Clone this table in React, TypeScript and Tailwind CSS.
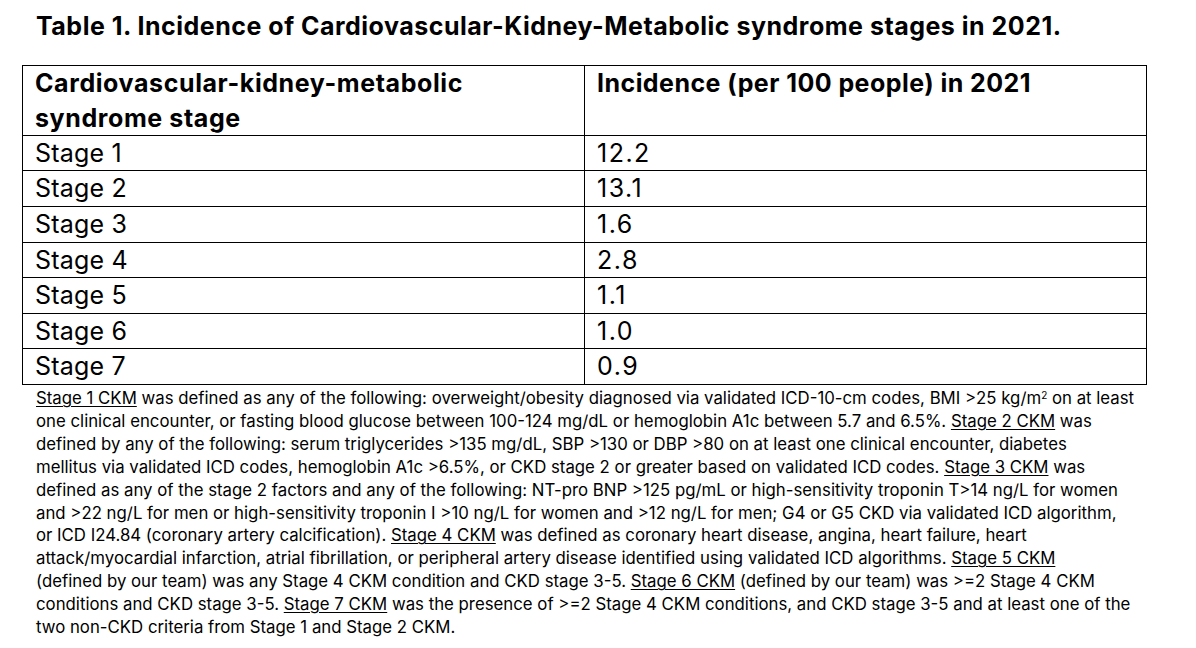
const rows = [
  ["Stage 1", "12.2"],
  ["Stage 2", "13.1"],
  ["Stage 3", "1.6"],
  ["Stage 4", "2.8"],
  ["Stage 5", "1.1"],
  ["Stage 6", "1.0"],
  ["Stage 7", "0.9"],
];

function U({ children }: { children: React.ReactNode }) {
  return <span className="underline underline-offset-[2px] decoration-1">{children}</span>;
}

export default function App() {
  return (
    <div
      className="w-[1196px] h-[648px] bg-white text-black overflow-hidden"
      style={{ fontFamily: "Inter, 'Liberation Sans', sans-serif" }}
    >
      {/* Title */}
      <h1 className="pt-[11px] pl-[36px] text-[25px] leading-[30px] tracking-[0.5px] font-bold whitespace-nowrap">
        Table 1. Incidence of Cardiovascular-Kidney-Metabolic syndrome stages in 2021.
      </h1>

      {/* Table */}
      <div className="mt-[24px] ml-[22px] w-[1125px] border-l border-t border-black grid grid-cols-[562px_562px] grid-rows-[70px_35px_36px_36px_35px_36px_35px_36px]">
        <div className="border-r border-b border-black px-[12px] text-[25px] leading-[35px] tracking-[0.6px] font-bold whitespace-nowrap">
          Cardiovascular-kidney-metabolic
          <br />
          syndrome stage
        </div>
        <div className="border-r border-b border-black px-[12px] text-[25px] leading-[35px] tracking-[0.45px] font-bold whitespace-nowrap">
          Incidence (per 100 people) in 2021
        </div>
        {rows.map(([stage, value]) => (
          <>
            <div key={stage} className="border-r border-b border-black px-[12px] pt-[1px] text-[25px] leading-[33px] tracking-[0.2px]">
              {stage}
            </div>
            <div key={value} className="border-r border-b border-black px-[12px] pt-[1px] text-[25px] leading-[33px] tracking-[1.5px]">
              {value}
            </div>
          </>
        ))}
      </div>

      {/* Footnote */}
      <div className="pl-[36px] pt-[2px] text-[16.8px] leading-[22.9px] whitespace-nowrap">
        <div>
          <U>Stage 1 CKM</U> was defined as any of the following: overweight/obesity diagnosed via validated ICD-10-cm codes, BMI &gt;25 kg/m<sup className="text-[10px]">2</sup> on at least
        </div>
        <div>
          one clinical encounter, or fasting blood glucose between 100-124 mg/dL or hemoglobin A1c between 5.7 and 6.5%. <U>Stage 2 CKM</U> was
        </div>
        <div>
          defined by any of the following: serum triglycerides &gt;135 mg/dL, SBP &gt;130 or DBP &gt;80 on at least one clinical encounter, diabetes
        </div>
        <div>
          mellitus via validated ICD codes, hemoglobin A1c &gt;6.5%, or CKD stage 2 or greater based on validated ICD codes. <U>Stage 3 CKM</U> was
        </div>
        <div>
          defined as any of the stage 2 factors and any of the following: NT-pro BNP &gt;125 pg/mL or high-sensitivity troponin T&gt;14 ng/L for women
        </div>
        <div>
          and &gt;22 ng/L for men or high-sensitivity troponin I &gt;10 ng/L for women and &gt;12 ng/L for men; G4 or G5 CKD via validated ICD algorithm,
        </div>
        <div>
          or ICD I24.84 (coronary artery calcification). <U>Stage 4 CKM</U> was defined as coronary heart disease, angina, heart failure, heart
        </div>
        <div>
          attack/myocardial infarction, atrial fibrillation, or peripheral artery disease identified using validated ICD algorithms. <U>Stage 5 CKM</U>
        </div>
        <div>
          (defined by our team) was any Stage 4 CKM condition and CKD stage 3-5. <U>Stage 6 CKM</U> (defined by our team) was &gt;=2 Stage 4 CKM
        </div>
        <div>
          conditions and CKD stage 3-5. <U>Stage 7 CKM</U> was the presence of &gt;=2 Stage 4 CKM conditions, and CKD stage 3-5 and at least one of the
        </div>
        <div>two non-CKD criteria from Stage 1 and Stage 2 CKM.</div>
      </div>
    </div>
  );
}
